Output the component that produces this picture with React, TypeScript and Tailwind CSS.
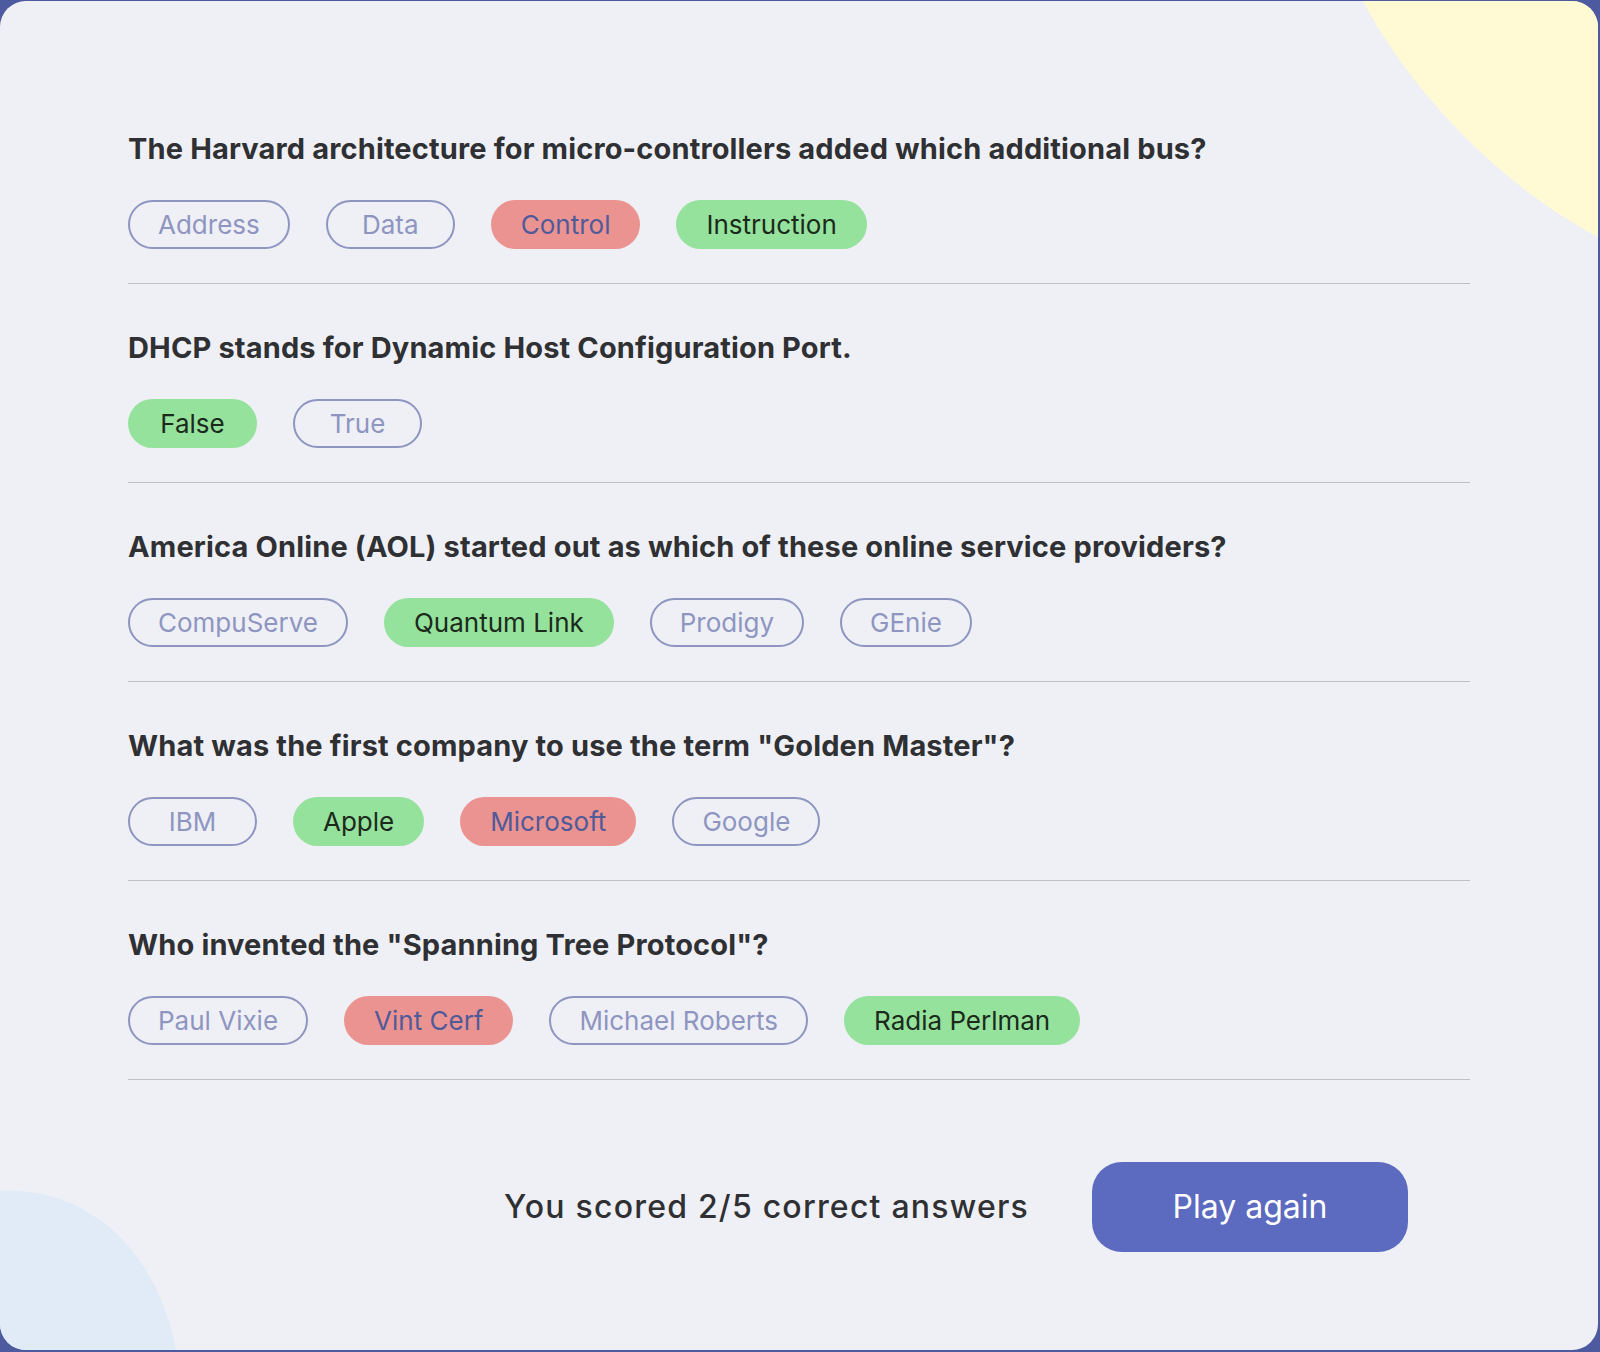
type Status = 'idle' | 'wrong' | 'correct';

interface Answer {
  label: string;
  status: Status;
}

interface Question {
  text: string;
  answers: Answer[];
}

const questions: Question[] = [
  {
    text: 'The Harvard architecture for micro-controllers added which additional bus?',
    answers: [
      { label: 'Address', status: 'idle' },
      { label: 'Data', status: 'idle' },
      { label: 'Control', status: 'wrong' },
      { label: 'Instruction', status: 'correct' },
    ],
  },
  {
    text: 'DHCP stands for Dynamic Host Configuration Port.',
    answers: [
      { label: 'False', status: 'correct' },
      { label: 'True', status: 'idle' },
    ],
  },
  {
    text: 'America Online (AOL) started out as which of these online service providers?',
    answers: [
      { label: 'CompuServe', status: 'idle' },
      { label: 'Quantum Link', status: 'correct' },
      { label: 'Prodigy', status: 'idle' },
      { label: 'GEnie', status: 'idle' },
    ],
  },
  {
    text: 'What was the first company to use the term "Golden Master"?',
    answers: [
      { label: 'IBM', status: 'idle' },
      { label: 'Apple', status: 'correct' },
      { label: 'Microsoft', status: 'wrong' },
      { label: 'Google', status: 'idle' },
    ],
  },
  {
    text: 'Who invented the "Spanning Tree Protocol"?',
    answers: [
      { label: 'Paul Vixie', status: 'idle' },
      { label: 'Vint Cerf', status: 'wrong' },
      { label: 'Michael Roberts', status: 'idle' },
      { label: 'Radia Perlman', status: 'correct' },
    ],
  },
];

const answerStyles: Record<Status, string> = {
  idle: 'border-[#8e95c1] text-[#8e95c1]',
  wrong: 'border-transparent bg-[#eb9391] text-[#4f5a99]',
  correct: 'border-transparent bg-[#95e29c] text-[#1c2a1c]',
};

function AnswerPill({ answer }: { answer: Answer }) {
  return (
    <button
      className={`h-[49px] min-w-[129px] rounded-full border-2 px-[28px] text-[26px] leading-none ${answerStyles[answer.status]}`}
    >
      {answer.label}
    </button>
  );
}

function QuestionBlock({ question, first }: { question: Question; first: boolean }) {
  return (
    <div className={first ? '' : 'mt-[47px]'}>
      <h2 className="text-[29px] leading-[34px] font-bold tracking-[0.005em] text-[#2f3033]">
        {question.text}
      </h2>
      <div className="mt-[34px] flex gap-9">
        {question.answers.map((a) => (
          <AnswerPill key={a.label} answer={a} />
        ))}
      </div>
      <div className="mt-[34px] h-px bg-[#bfc0c6]" />
    </div>
  );
}

export default function App() {
  return (
    <div
      className="min-h-screen bg-[#4d5aa0] pt-[1px] pr-[2px]"
      style={{ fontFamily: 'Inter, "Noto Sans", sans-serif' }}
    >
      <div className="relative h-[1349px] overflow-hidden rounded-[26px] bg-[#eff0f5]">
        {/* decorative blobs */}
        <svg className="absolute top-0 right-0" width="240" height="240" viewBox="1360 0 240 240">
          <path d="M1365 0 C1410 85 1495 180 1600 236 L1600 0 Z" fill="#fffad3" />
        </svg>
        <svg className="absolute bottom-0 left-0" width="180" height="162" viewBox="0 1190 180 162">
          <path d="M0 1193 C95 1188 160 1262 176 1352 L0 1352 Z" fill="#e1ebf7" />
        </svg>

        <div className="relative px-32 pt-[131px]">
          {questions.map((q, i) => (
            <QuestionBlock key={q.text} question={q} first={i === 0} />
          ))}

          <div className="mt-[82px] flex items-center justify-end gap-[63px] pr-[62px]">
            <span className="text-[32px] font-medium tracking-[0.038em] text-[#2f3033]">
              You scored 2/5 correct answers
            </span>
            <button className="h-[90px] w-[316px] rounded-[30px] bg-[#5c6abf] text-[32px] text-white">
              Play again
            </button>
          </div>
        </div>
      </div>
    </div>
  );
}
